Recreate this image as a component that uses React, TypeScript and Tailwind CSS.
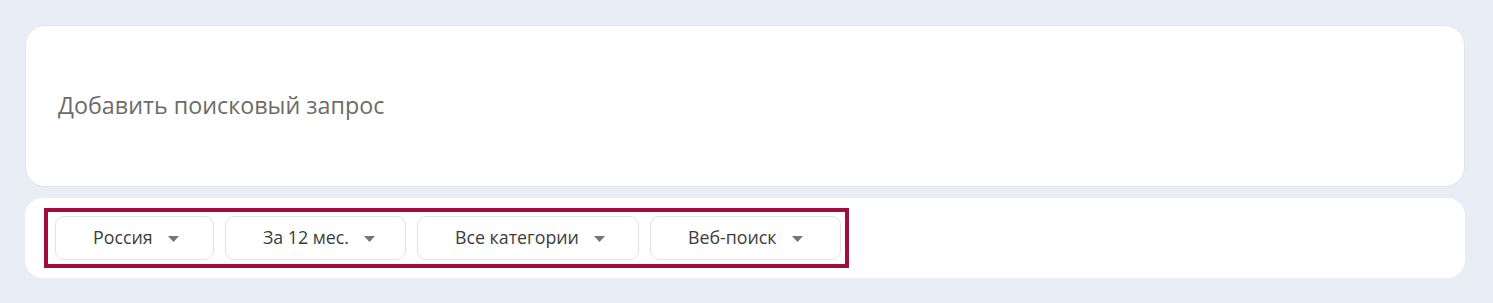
import React from "react";

const Arrow = () => (
  <svg width="11" height="6" viewBox="0 0 11 6" className="shrink-0 mt-[1px]">
    <path d="M0 0 L11 0 L5.5 6 Z" fill="#767676" />
  </svg>
);

const chips = [
  { label: "Россия", w: "w-[159px]" },
  { label: "За 12 мес.", w: "w-[181px]" },
  { label: "Все категории", w: "w-[222px]" },
  { label: "Веб-поиск", w: "w-[191px]" },
];

export default function App() {
  return (
    <div
      className="w-[1493px] h-[303px] bg-[#e9edf6] pt-[25px] px-[25px] flex flex-col gap-[11px]"
      style={{ fontFamily: '"Open Sans", "Noto Sans", sans-serif' }}
    >
      <div className="w-[1440px] h-[162px] bg-white rounded-[20px] border border-[#e2e4e8] flex items-center pl-[32px]">
        <span className="text-[23.3px] text-[#6e6c69] leading-none">Добавить поисковый запрос</span>
      </div>
      <div className="w-[1440px] h-[80px] bg-white rounded-[18px] flex items-center pl-[19px]">
        <div className="h-[60px] border-[4px] border-[#a30d3a] flex items-center gap-[11px] pl-[7px] pr-[4px]">
          {chips.map((c) => (
            <div
              key={c.label}
              className={`${c.w} h-[44px] rounded-[9px] border border-[#e3e3e3] flex items-center pl-[37px] gap-[15px]`}
            >
              <span className="text-[17.8px] text-[#3c3c3c] leading-none">{c.label}</span>
              <Arrow />
            </div>
          ))}
        </div>
      </div>
    </div>
  );
}
